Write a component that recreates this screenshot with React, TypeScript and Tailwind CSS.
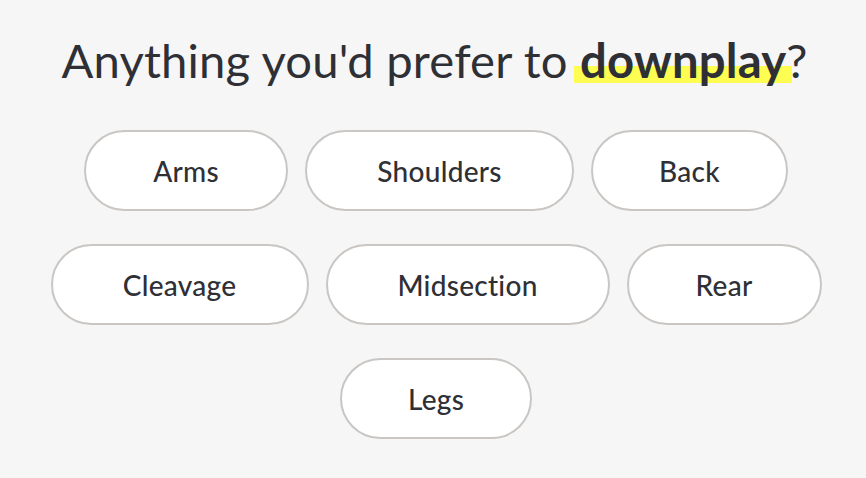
const ROWS: { label: string; width: string }[][] = [
  [
    { label: "Arms", width: "w-[204px]" },
    { label: "Shoulders", width: "w-[269px]" },
    { label: "Back", width: "w-[197px]" },
  ],
  [
    { label: "Cleavage", width: "w-[258px]" },
    { label: "Midsection", width: "w-[284px]" },
    { label: "Rear", width: "w-[195px]" },
  ],
  [{ label: "Legs", width: "w-[192px]" }],
];

function Chip({ label, width }: { label: string; width: string }) {
  return (
    <button
      type="button"
      className={`flex h-[81px] ${width} items-center justify-center rounded-full border-2 border-[#c9c6c3] bg-white text-[28px] font-medium tracking-[0.01em] text-[#2f3035]`}
    >
      {label}
    </button>
  );
}

export default function App() {
  return (
    <div className="flex min-h-[478px] w-full flex-col items-center bg-[#f6f6f6] pt-[28px] font-['Lato',sans-serif]">
      <h1 className="pl-[3px] text-[47.2px] font-normal leading-[64px] tracking-[0.004em] text-[#2f3035]">
        Anything you'd prefer to{" "}
        <span className="-mx-[6px] bg-[linear-gradient(transparent_62%,#fdfd52_62%,#fdfd52_92%,transparent_92%)] px-[6px] font-bold">
          downplay
        </span>
        ?
      </h1>

      <div className="mt-[38px] flex flex-col items-center gap-[33px] pl-[6px]">
        {ROWS.map((row, i) => (
          <div key={i} className="flex gap-[17px]">
            {row.map((chip) => (
              <Chip key={chip.label} label={chip.label} width={chip.width} />
            ))}
          </div>
        ))}
      </div>
    </div>
  );
}
